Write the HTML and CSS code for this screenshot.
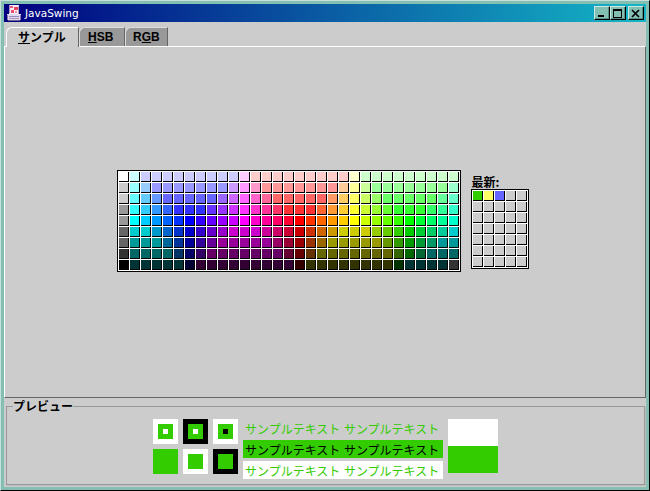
FILE: index.html
```html
<!DOCTYPE html>
<html lang="ja">
<head>
    <meta charset="UTF-8">
    <title>JavaSwing</title>
    <link rel="stylesheet" href="styles.css">
</head>
<body>
    <div class="window">
        <div class="titlebar">
            <svg class="app-icon" width="16" height="16" viewBox="0 0 16 16" shape-rendering="crispEdges">
                <rect x="3" y="0" width="10" height="10" fill="#f6eef4"/>
                <rect x="1" y="9" width="14" height="6" fill="#e0d8ec"/>
                <rect x="4" y="1" width="3" height="2" fill="#e86080"/>
                <rect x="8" y="2" width="4" height="3" fill="#e84060"/>
                <rect x="5" y="5" width="3" height="3" fill="#f05070"/>
                <rect x="9" y="6" width="2" height="2" fill="#f090a0"/>
                <rect x="3" y="0" width="1" height="8" fill="#a890b8"/>
                <rect x="12" y="1" width="1" height="8" fill="#b8a0c0"/>
                <rect x="1" y="10" width="1" height="5" fill="#8878a8"/>
                <rect x="3" y="11" width="10" height="1" fill="#9888b8"/>
                <rect x="3" y="13" width="10" height="1" fill="#a898c0"/>
                <rect x="2" y="15" width="12" height="1" fill="#706090"/>
                <rect x="14" y="10" width="1" height="5" fill="#8878a8"/>
            </svg>
            <span class="title-text">JavaSwing</span>
            <div class="title-buttons">
                <div class="win-btn">
                    <svg width="10" height="9" viewBox="0 0 10 9" shape-rendering="crispEdges"><rect x="1" y="6" width="6" height="2"/></svg>
                </div>
                <div class="win-btn">
                    <svg width="10" height="9" viewBox="0 0 10 9" shape-rendering="crispEdges"><path d="M0 0h9v9H0z M1 2v6h7V2z" fill-rule="evenodd"/></svg>
                </div>
                <div class="win-btn win-btn-close">
                    <svg width="10" height="9" viewBox="0 0 10 9"><path d="M1 1l7 7M8 1l-7 7" stroke="#000" stroke-width="1.7" fill="none"/></svg>
                </div>
            </div>
        </div>

        <div class="content">
            <div class="tabs">
                <div class="tab tab-active"><u>サ</u>ンプル</div>
                <div class="tab tab-hsb"><u>H</u>SB</div>
                <div class="tab tab-rgb">R<u>G</u>B</div>
            </div>

            <div class="tab-panel">
                <div class="chooser">
                    <div class="swatches" id="main-swatches"></div>
                    <div class="recent">
                        <div class="recent-label">最新:</div>
                        <div class="swatches" id="recent-swatches"></div>
                    </div>
                </div>
            </div>

            <fieldset class="preview">
                <legend>プレビュー</legend>
                <div class="preview-row">
                    <div class="chips">
                        <div class="chip chip-white"><div class="chip-inner"><div class="chip-dot"></div></div></div>
                        <div class="chip chip-black"><div class="chip-inner"><div class="chip-dot"></div></div></div>
                        <div class="chip chip-white"><div class="chip-inner"><div class="chip-dot chip-dot-black"></div></div></div>
                        <div class="chip chip-green"></div>
                        <div class="chip chip-white"><div class="chip-inner"></div></div>
                        <div class="chip chip-black"><div class="chip-inner"></div></div>
                    </div>
                    <div class="samples">
                        <div class="sample sample-plain">サンプルテキスト サンプルテキスト</div>
                        <div class="sample sample-green">サンプルテキスト サンプルテキスト</div>
                        <div class="sample sample-white">サンプルテキスト サンプルテキスト</div>
                    </div>
                    <div class="old-new">
                        <div class="old-color"></div>
                        <div class="new-color"></div>
                    </div>
                </div>
            </fieldset>
        </div>
    </div>

    <script src="swatches.js"></script>
</body>
</html>
```

FILE: styles.css
```css
* {
    margin: 0;
    padding: 0;
    box-sizing: border-box;
}

body {
    width: 650px;
    height: 491px;
    overflow: hidden;
    font-family: "Noto Sans CJK JP", "Liberation Sans", sans-serif;
    font-size: 12px;
    color: #000;
}

.window {
    width: 650px;
    height: 491px;
    display: flex;
    flex-direction: column;
    padding: 3px;
    background: #84bfb3;
    border: 1px solid;
    border-color: #c8e0da #000 #000 #c8e0da;
}

.titlebar {
    height: 18px;
    flex: none;
    display: flex;
    align-items: center;
    padding: 0 2px;
    background: linear-gradient(90deg, #000080 0%, #14b6c6 100%);
    color: #fff;
}

.app-icon {
    flex: none;
}

.title-text {
    margin-left: 3px;
    font-family: "DejaVu Sans", sans-serif;
    font-size: 10.5px;
}

.title-buttons {
    margin-left: auto;
    display: flex;
}

.win-btn {
    width: 16px;
    height: 14px;
    display: flex;
    align-items: center;
    justify-content: center;
    background: #84bfb3;
    border: 1px solid;
    border-color: #d0e8e2 #000 #000 #d0e8e2;
    box-shadow: inset -1px -1px 0 #5a8f85;
}

.win-btn-close {
    margin-left: 2px;
}

.content {
    flex: 1;
    display: flex;
    flex-direction: column;
    background: #ccc;
}

.tabs {
    height: 24px;
    flex: none;
    display: flex;
    align-items: flex-end;
    padding-left: 2px;
    position: relative;
    z-index: 1;
}

.tab {
    height: 19px;
    line-height: 18px;
    font-weight: bold;
    background: #999;
    border-top: 1px solid #ddd;
    border-left: 1px solid #ddd;
    border-right: 1px solid #666;
    border-top-left-radius: 6px;
}

.tab-active {
    width: 73px;
    height: 20px;
    padding-left: 11px;
    margin-bottom: -1px;
    background: #ccc;
    border-top-color: #fff;
    border-left-color: #fff;
}

.tab-hsb,
.tab-rgb {
    font-family: "Liberation Sans", sans-serif;
}

.tab-hsb {
    width: 46px;
    padding-left: 8px;
}

.tab-rgb {
    width: 43px;
    padding-left: 7px;
}

.tab-panel {
    height: 352px;
    flex: none;
    display: flex;
    align-items: center;
    justify-content: center;
    padding: 0 5px 3px 0;
    border: 1px solid;
    border-color: #fff #666 #666 #fff;
}

.chooser {
    display: flex;
    align-items: flex-start;
    gap: 10px;
}

.swatches {
    display: grid;
    gap: 1px;
    padding: 1px;
    background: #fff;
    border: 1px solid #000;
}

#main-swatches {
    grid-template-columns: repeat(31, 10px);
    grid-auto-rows: 10px;
}

#recent-swatches {
    grid-template-columns: repeat(5, 10px);
    grid-auto-rows: 10px;
}

.swatch {
    border-right: 1px solid #000;
    border-bottom: 1px solid #000;
}

.recent-label {
    height: 19px;
    padding: 5px 0 0 1px;
    line-height: 13px;
    font-weight: bold;
}

.preview {
    flex: 1;
    margin: 2px 1px 2px 2px;
    padding: 7px 0 0;
    border: 1px solid #999;
    box-shadow: 1px 1px 0 #bbb;
}

.preview legend {
    margin-left: 6px;
    padding: 0;
    line-height: 12px;
    font-weight: bold;
}

.preview-row {
    display: flex;
    justify-content: center;
    gap: 5px;
}

.chips {
    display: grid;
    grid-template-columns: repeat(3, 25px);
    grid-auto-rows: 25px;
    gap: 5px;
}

.chip {
    display: flex;
    align-items: center;
    justify-content: center;
}

.chip-white {
    background: #fff;
}

.chip-black {
    background: #000;
}

.chip-green,
.chip-inner {
    background: #3c0;
}

.chip-inner {
    width: 15px;
    height: 15px;
    display: flex;
    align-items: center;
    justify-content: center;
}

.chip-dot {
    width: 5px;
    height: 5px;
    background: #fff;
}

.chip-dot-black {
    background: #000;
}

.samples {
    width: 200px;
    display: flex;
    flex-direction: column;
    gap: 3px;
}

.sample {
    height: 18px;
    padding-left: 2px;
    line-height: 20px;
    white-space: nowrap;
    word-spacing: 1px;
}

.sample-plain {
    color: #3c0;
}

.sample-green {
    background: #3c0;
    color: #000;
}

.sample-white {
    background: #fff;
    color: #3c0;
}

.old-new {
    width: 50px;
    height: 54px;
}

.old-color {
    height: 27px;
    background: #fff;
}

.new-color {
    height: 27px;
    background: #3c0;
}
```

FILE: swatches.js
```js
// colours of the main swatch panel, one line per row
const mainColors = [
    'fff cff ccf ccf ccf ccf ccf ccf ccf ccf ccf fcf fcc fcc fcc fcc fcc fcc fcc fcc fcc ffc cfc cfc cfc cfc cfc cfc cfc cfc cfc',
    'ccc 9ff 9cf 99f 99f 99f 99f 99f 99f 99f c9f f9f f9c f99 f99 f99 f99 f99 f99 f99 fc9 ff9 cf9 9f9 9f9 9f9 9f9 9f9 9f9 9f9 9fc',
    'ccc 6ff 6cf 69f 66f 66f 66f 66f 66f 96f c6f f6f f6c f69 f66 f66 f66 f66 f66 f96 fc6 ff6 cf6 9f6 6f6 6f6 6f6 6f6 6f6 6f9 6fc',
    '999 3ff 3cf 39f 36f 33f 33f 33f 63f 93f c3f f3f f3c f39 f36 f33 f33 f33 f63 f93 fc3 ff3 cf3 9f3 6f3 3f3 3f3 3f3 3f6 3f9 3fc',
    '999 0ff 0cf 09f 06f 03f 00f 30f 60f 90f c0f f0f f0c f09 f06 f03 f00 f30 f60 f90 fc0 ff0 cf0 9f0 6f0 3f0 0f0 0f3 0f6 0f9 0fc',
    '666 0cc 0cc 09c 06c 03c 00c 30c 60c 90c c0c c0c c0c c09 c06 c03 c00 c30 c60 c90 cc0 cc0 cc0 9c0 6c0 3c0 0c0 0c3 0c6 0c9 0cc',
    '666 099 099 099 069 039 009 309 609 909 909 909 909 909 906 903 900 930 960 990 990 990 990 990 690 390 090 093 096 099 099',
    '333 066 066 066 066 036 006 306 606 606 606 606 606 606 606 603 600 630 660 660 660 660 660 660 660 360 060 063 066 066 066',
    '000 033 033 033 033 033 003 303 303 303 303 303 303 303 303 303 300 330 330 330 330 330 330 330 330 030 033 033 033 033 333'
];

const recentColors = ['3c0', 'ff6', '66f'];

function addSwatch(container, color) {
    const swatch = document.createElement('div');
    swatch.className = 'swatch';
    swatch.style.background = '#' + color;
    container.appendChild(swatch);
}

const mainPanel = document.getElementById('main-swatches');
mainColors.join(' ').split(' ').forEach(color => addSwatch(mainPanel, color));

const recentPanel = document.getElementById('recent-swatches');
for (let i = 0; i < 35; i++) {
    addSwatch(recentPanel, recentColors[i] || 'ccc');
}
```
